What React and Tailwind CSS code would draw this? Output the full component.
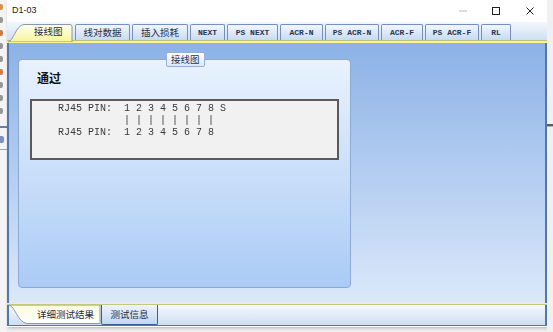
import React from 'react';

const cjk = '"Noto Sans CJK SC", "Noto Sans", sans-serif';
const mono = '"Liberation Mono", monospace';

const topTabs = [
  { label: '线对数据', w: 'w-[55px]', zh: true },
  { label: '插入损耗', w: 'w-[56px]', zh: true },
  { label: 'NEXT', w: 'w-[35px]' },
  { label: 'PS NEXT', w: 'w-[51px]' },
  { label: 'ACR-N', w: 'w-[43px]' },
  { label: 'PS ACR-N', w: 'w-[54px]' },
  { label: 'ACR-F', w: 'w-[42px]' },
  { label: 'PS ACR-F', w: 'w-[54px]' },
  { label: 'RL', w: 'w-[30px]' },
];

const Tab = ({ label, w, zh }) => (
  <div
    className={`${w} h-[16px] flex items-center justify-center rounded-t-[2px] border border-b-0 border-[#7390c0] bg-linear-to-b from-[#f2f7fd] to-[#c8daf2] text-[#1c2c48]`}
  >
    {zh ? (
      <span className="text-[9.5px] leading-none" style={{ fontFamily: cjk }}>{label}</span>
    ) : (
      <span className="text-[8px] font-bold leading-none whitespace-pre text-[#2a3550]" style={{ fontFamily: mono }}>{label}</span>
    )}
  </div>
);

// sliver of the window lying behind, on the left edge (clipped glyph marks)
const BehindStrip = () => {
  const rows = ['bg-[#d07a1e]', 'bg-[#808080]', 'bg-[#c85a20]', 'bg-[#808080]', 'bg-[#808080]', 'bg-[#c86020]', 'bg-[#808080]', 'bg-[#808080]', 'bg-[#808080]'];
  return (
    <div className="w-[7px] h-full bg-[#f4f4f4] flex flex-col overflow-hidden">
      <div className="flex flex-col pt-[4px] gap-[7px]">
        {rows.map((c, i) => (
          <div key={i} className={`w-[3px] h-[6px] ${c} rounded-r-[2px] opacity-80`} />
        ))}
      </div>
      <div className="mt-[12px] h-[2px] bg-[#6a7fa8]" />
      <div className="mt-[8px] w-[4px] h-[7px] rounded-r-[2px] bg-[#7a90c0]" />
      <div className="mt-[6px] h-[1px] bg-[#9aa8c0]" />
      <div className="flex-1" />
    </div>
  );
};

export default function App() {
  return (
    <div className="w-[553px] h-[332px] bg-[#eeeeee] flex overflow-hidden">
      <BehindStrip />

      <div className="w-[540px] h-[327px] flex flex-col bg-white shadow-[1px_1px_3px_rgba(0,0,0,0.25)]">
        {/* title bar */}
        <div className="h-[22px] flex items-center bg-white">
          <span className="pl-[5px] text-[9px] text-[#1a1a1a] flex-1" style={{ fontFamily: '"Liberation Sans", sans-serif' }}>D1-03</span>
          <div className="w-[33px] h-full flex items-center justify-center">
            <svg width="8" height="8" viewBox="0 0 8 8"><line x1="0" y1="4" x2="8" y2="4" stroke="#b8b8b8" strokeWidth="1" /></svg>
          </div>
          <div className="w-[33px] h-full flex items-center justify-center">
            <svg width="8" height="8" viewBox="0 0 8 8"><rect x="0.5" y="0.5" width="7" height="7" fill="none" stroke="#222" strokeWidth="1" /></svg>
          </div>
          <div className="w-[35px] h-full flex items-center justify-center">
            <svg width="8" height="8" viewBox="0 0 8 8"><path d="M0.5 0.5 L7.5 7.5 M7.5 0.5 L0.5 7.5" stroke="#222" strokeWidth="1" /></svg>
          </div>
        </div>

        {/* top tab strip */}
        <div className="h-[18px] flex items-end bg-linear-to-b from-[#f3f7fd] to-[#cfdff3] relative">
          <div className="w-[66px] h-[18px] relative -mb-[1px] shrink-0">
            <svg className="absolute inset-0" width="66" height="19" viewBox="0 0 66 19">
              <defs>
                <linearGradient id="tabY" x1="0" y1="0" x2="0" y2="1">
                  <stop offset="0" stopColor="#fffff2" />
                  <stop offset="1" stopColor="#f8f49a" />
                </linearGradient>
              </defs>
              <path d="M1 19 C6 19 9 2 17 1.5 L63 1.5 Q65 1.5 65 3.5 L65 19 Z" fill="url(#tabY)" stroke="#8a98a8" strokeWidth="1" />
            </svg>
            <span className="absolute left-[27px] top-[4px] text-[9.5px] leading-none text-[#1c2c48]" style={{ fontFamily: cjk }}>接线图</span>
          </div>
          <div className="flex items-end gap-[2px] pl-[2px]">
            {topTabs.map((t) => (
              <Tab key={t.label} {...t} />
            ))}
          </div>
        </div>
        <div className="h-[3px] border-t border-[#b9c27a] bg-[#f6f68c]" />

        {/* content */}
        <div className="h-[260px] flex border-l-2 border-r-2 border-[#5276b0] bg-linear-to-b from-[#8cb2e6] to-[#dbe8fa] pl-[9px] pt-[16px]">
          <div className="w-[333px] h-[229px] relative rounded-[4px] border border-[#8ea9d2] bg-linear-to-b from-[#e9f2fd] to-[#aacbf5]">
            <div className="absolute left-[147px] -top-[8px] h-[15px] px-[4px] flex items-center rounded-[2px] border border-[#93b0dc] bg-linear-to-b from-[#ffffff] to-[#dce8f8]">
              <span className="text-[9.5px] leading-none text-[#1e3458]" style={{ fontFamily: cjk }}>接线图</span>
            </div>
            <div className="pl-[18px] pt-[9px] text-[12px] font-bold leading-[18px] text-[#111]" style={{ fontFamily: cjk }}>通过</div>
            <div className="ml-[11px] mt-[12px] w-[309px] h-[61px] border-2 border-[#5a5a5a] bg-[#f1f1f1] pl-[26px] pt-[2px]">
              <pre className="text-[10px] leading-[12px] text-[#3a3a3a] antialiased will-change-transform" style={{ fontFamily: mono }}>
{`RJ45 PIN:  1 2 3 4 5 6 7 8 S
           | | | | | | | |
RJ45 PIN:  1 2 3 4 5 6 7 8`}
              </pre>
            </div>
          </div>
        </div>

        {/* bottom tab strip */}
        <div className="h-[2px] bg-[#f6f68c] border-b border-[#c2c87c]" />
        <div className="h-[21px] flex items-start border-l-2 border-r-2 border-b border-[#5276b0] bg-linear-to-b from-[#f6f9fe] to-[#cfdef2]">
          <div className="w-[92px] h-[20px] relative shrink-0">
            <svg className="absolute inset-0" width="92" height="20" viewBox="0 0 92 20">
              <defs>
                <linearGradient id="tabB" x1="0" y1="0" x2="0" y2="1">
                  <stop offset="0" stopColor="#fbfbd8" />
                  <stop offset="1" stopColor="#ffffff" />
                </linearGradient>
              </defs>
              <path d="M0 0 C6 1 9 18 18 18.5 L91 18.5 L91 0 Z" fill="url(#tabB)" stroke="#8a98a8" strokeWidth="1" />
            </svg>
            <span className="absolute left-[28px] top-[5px] text-[9.5px] leading-none text-[#1c2c48]" style={{ fontFamily: cjk }}>详细测试结果</span>
          </div>
          <div className="w-[57px] h-[20px] flex items-center justify-center border border-t-0 border-[#3d5d95] rounded-b-[2px] bg-linear-to-b from-[#eef4fc] to-[#c3d6f0]">
            <span className="text-[9.5px] leading-none text-[#1c2c48]" style={{ fontFamily: cjk }}>测试信息</span>
          </div>
        </div>
      </div>

      {/* background on the right */}
      <div className="flex-1 h-full flex flex-col bg-[#f0f0f0]">
        <div className="h-[124px]" />
        <div className="h-[2px] bg-[#5c5c5c]" />
        <div className="h-[1px] bg-[#b0b0b0]" />
      </div>
    </div>
  );
}
